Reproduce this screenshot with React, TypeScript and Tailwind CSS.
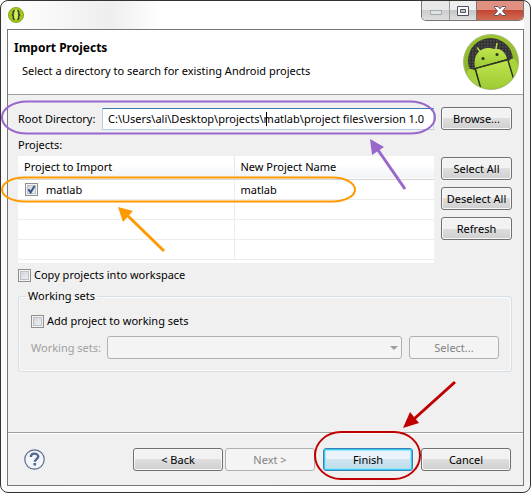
import { useState } from 'react'
import type { ButtonHTMLAttributes } from 'react'
import clsx from 'clsx'

interface DialogButtonProps extends ButtonHTMLAttributes<HTMLButtonElement> {
  primary?: boolean
}

function DialogButton({ primary, className, ...props }: DialogButtonProps) {
  return (
    <button
      type="button"
      className={clsx(
        'h-[23px] shrink-0 whitespace-nowrap rounded-[3px] border text-center leading-5',
        primary
          ? 'border-[#3c7fb1] bg-linear-to-b from-[#eaf4fa] from-50% via-[#cfe4f0] via-50% to-[#bcdcea] shadow-[inset_0_0_0_1px_#38c8f4,inset_0_0_0_2px_#a4e4f8]'
          : 'border-[#707070] bg-linear-to-b from-[#f2f2f2] from-50% via-[#dedede] via-50% to-[#cfcfcf] shadow-[inset_0_0_0_1px_#f8f8f8]',
        'disabled:border-[#adb2b5] disabled:bg-none disabled:bg-[#f4f4f4] disabled:text-[#838383] disabled:shadow-none',
        className,
      )}
      {...props}
    />
  )
}

interface CheckboxProps {
  id: string
  checked: boolean
  onChange: (checked: boolean) => void
}

function Checkbox({ id, checked, onChange }: CheckboxProps) {
  return (
    <span className="relative flex size-[13px] shrink-0">
      <input
        id={id}
        type="checkbox"
        checked={checked}
        onChange={(e) => onChange(e.target.checked)}
        className="size-[13px] appearance-none border border-[#8e8f8f] bg-linear-to-br from-[#cbcfd5] to-[#f6f6f6] shadow-[inset_0_0_0_1px_#f4f4f4,inset_0_0_0_2px_#bcc1c7]"
      />
      {checked && (
        <svg viewBox="0 0 13 13" className="pointer-events-none absolute inset-0 size-[13px]">
          <path d="M3.4 6.2 L5.6 9.4 L9.6 3" fill="none" stroke="#3c5488" strokeWidth="2" />
        </svg>
      )}
    </span>
  )
}

function AdtIcon() {
  return (
    <svg viewBox="0 0 16 16" className="size-4" aria-hidden="true">
      <circle cx="8" cy="8" r="7.6" fill="#a4c814" stroke="#7b9c12" strokeWidth=".8" />
      <ellipse cx="8" cy="7.5" rx="2.6" ry="5" fill="#d2ea5c" />
      <path
        d="M6.8 3.6 C5.1 3.6 5.3 5 5.3 6.2 C5.3 7.4 4.8 8 3.8 8 C4.8 8 5.3 8.6 5.3 9.8 C5.3 11 5.1 12.4 6.8 12.4 M9.2 3.6 C10.9 3.6 10.7 5 10.7 6.2 C10.7 7.4 11.2 8 12.2 8 C11.2 8 10.7 8.6 10.7 9.8 C10.7 11 10.9 12.4 9.2 12.4"
        fill="none"
        stroke="#39452f"
        strokeWidth="1.6"
      />
    </svg>
  )
}

function AndroidLogo() {
  return (
    <svg viewBox="0 0 56 56" className="size-14" aria-hidden="true">
      <defs>
        <linearGradient id="ring" x1="0" y1="0" x2="0" y2="1">
          <stop offset="0" stopColor="#9bc431" />
          <stop offset="1" stopColor="#86ac25" />
        </linearGradient>
        <linearGradient id="robot" x1="0" y1="0" x2="0" y2="1">
          <stop offset="0" stopColor="#bfe44e" />
          <stop offset="1" stopColor="#9bc932" />
        </linearGradient>
        <pattern id="mesh" width="3" height="3" patternUnits="userSpaceOnUse">
          <rect width="3" height="3" fill="#333333" />
          <rect width="1.5" height="1.5" fill="#505050" />
        </pattern>
        <clipPath id="disc">
          <circle cx="28" cy="28" r="27" />
        </clipPath>
      </defs>
      <circle cx="28" cy="28" r="27.5" fill="url(#ring)" stroke="#a9bd78" />
      <circle cx="27.5" cy="26.5" r="22.5" fill="url(#mesh)" />
      <g clipPath="url(#disc)">
        <path d="M3 36 L12 36 L17 56 L0 56 Z M45 27 L51 25 L56 40 L50 50 Z" fill="#8fb62b" />
        <path d="M4 39 C4 34 11 34 12.5 38 L17 56 L8 56 Z" fill="#a9d33c" />
        <path d="M46 30 C45 25 51 23 53 27 L57 36 L51 48 Z" fill="#a9d33c" />
        <path d="M12 34 C9 16 23 12 31 15 C38 14 43 19 44 25 Z" fill="url(#robot)" />
        <path d="M13 35 L45 26.5 L51 48 L38 57 L18 57 Z" fill="url(#robot)" />
        <path d="M12 34.5 L46 25" stroke="#27331a" strokeWidth="1.2" />
        <path d="M12.5 35.5 L18 55 M45 26.5 L51 46" stroke="#27331a" strokeWidth="1.4" />
        <path d="M17 17.5 L14.5 14 M33 14.5 L34 9.5" stroke="#b5dc4a" strokeWidth="1.5" strokeLinecap="round" />
        <circle cx="20" cy="24.5" r="1.5" fill="#27331a" />
        <circle cx="34" cy="20.5" r="1.5" fill="#27331a" />
      </g>
    </svg>
  )
}

function WindowControls() {
  return (
    <div className="flex h-5 overflow-hidden rounded-b-[5px] border border-t-0 border-[#777777]">
      <button
        type="button"
        aria-label="Minimize"
        className="flex w-7 items-center justify-center border-r border-[#999999] bg-linear-to-b from-[#e8e8e8] from-50% via-[#cdcdcd] via-50% to-[#dedede]"
      >
        <svg viewBox="0 0 12 5" className="mt-1 h-[5px] w-3">
          <rect x=".5" y=".5" width="11" height="4" fill="#dfe3e5" stroke="#a6adb1" />
        </svg>
      </button>
      <button
        type="button"
        aria-label="Maximize"
        className="flex w-[27px] items-center justify-center border-r border-[#777777] bg-linear-to-b from-[#eeeeee] from-50% via-[#c6c6c6] via-50% to-[#dedede]"
      >
        <svg viewBox="0 0 12 10" className="h-[10px] w-3">
          <path d="M.5 .5 H11.5 V9.5 H.5 Z M3.5 3.5 V6.5 H8.5 V3.5 Z" fill="#fafafa" stroke="#4c5063" fillRule="evenodd" />
        </svg>
      </button>
      <button
        type="button"
        aria-label="Close"
        className="flex w-[46px] items-center justify-center bg-linear-to-b from-[#df9080] from-50% via-[#c24634] via-50% to-[#d36b52]"
      >
        <svg viewBox="0 0 12 10" className="h-[10px] w-3">
          <path
            d="M.5 .5 H4 L6 2.8 L8 .5 H11.5 V1.5 L8.5 5 L11.5 8.5 V9.5 H8 L6 7.2 L4 9.5 H.5 V8.5 L3.5 5 L.5 1.5 Z"
            fill="#ffffff"
            stroke="#5d5360"
          />
        </svg>
      </button>
    </div>
  )
}

// hand drawn callouts that sit on top of the dialog
function Callouts() {
  return (
    <svg viewBox="0 0 531 493" className="pointer-events-none absolute left-0 top-0 h-[493px] w-[531px]" aria-hidden="true">
      <g fill="none" strokeWidth="2">
        <rect x="2" y="101.5" width="433" height="32" rx="25" ry="16" stroke="#9966cc" />
        <rect x="2" y="177.5" width="353" height="24" rx="22" ry="12" stroke="#ff9900" />
        <rect x="315" y="432" width="105" height="47" rx="26" ry="23.5" stroke="#c00000" />
      </g>
      <path d="M405 189 L378 150" stroke="#9966cc" strokeWidth="3" />
      <path d="M370 139 L372 155 L384 147 Z" fill="#9966cc" />
      <path d="M164 251 L128 216" stroke="#ff9900" strokeWidth="3" />
      <path d="M118 207 L123 222 L133 211 Z" fill="#ff9900" />
      <path d="M455 382 L414 419" stroke="#c00000" strokeWidth="3" />
      <path d="M403 428 L419 423 L410 412 Z" fill="#c00000" />
    </svg>
  )
}

export default function App() {
  const [directory, setDirectory] = useState('C:\\Users\\ali\\Desktop\\projects\\matlab\\project files\\version 1.0')
  const [selected, setSelected] = useState(true)
  const [copy, setCopy] = useState(false)
  const [workingSet, setWorkingSet] = useState(false)

  return (
    <div className="relative min-h-screen bg-white font-['Noto_Sans','Open_Sans',sans-serif] text-[11px] leading-4 text-black">
      <div className="flex min-h-screen flex-col rounded-lg border border-[#333333] bg-linear-to-r from-[#fafafa] via-white to-[#f2f2f2] px-[6px] pb-[6px]">
        <div className="flex h-7 shrink-0 items-start justify-between bg-linear-to-r from-white via-[#eeeeee] via-20% to-white to-30% pl-px">
          <div className="pt-[6px]">
            <AdtIcon />
          </div>
          <WindowControls />
        </div>

        <main className="flex grow flex-col border border-[#777777] bg-[#f0f0f0]">
          <header className="flex h-[65px] shrink-0 justify-between border-b border-[#a0a0a0] bg-white pl-[6px] pr-1 pt-1">
            <div className="pt-[6px]">
              <h1 className="text-[12px] font-bold leading-4">Import Projects</h1>
              <p className="pl-2 pt-[7px]">Select a directory to search for existing Android projects</p>
            </div>
            <AndroidLogo />
          </header>

          <div className="grow pl-[10px] pr-[11px] pt-3">
            <div className="flex items-center">
              <label htmlFor="root" className="w-[84px] shrink-0">
                Root Directory:
              </label>
              <div className="relative flex min-w-0 grow">
                <input
                  id="root"
                  type="text"
                  value={directory}
                  onChange={(e) => setDirectory(e.target.value)}
                  className="h-[22px] w-full border border-[#b5cfe7] border-t-[#3d7bad] bg-white pl-[5px]"
                />
                {/* text caret */}
                <span className="absolute left-[164px] top-1 h-[14px] w-px bg-black" />
              </div>
              <DialogButton className="ml-[7px] w-[71px]">Browse...</DialogButton>
            </div>

            <p className="pb-[3px] pt-[7px]">Projects:</p>

            <div className="flex gap-[7px]">
              <div className="h-[107px] grow bg-white">
                <table className="w-full table-fixed border-collapse text-left">
                  <thead>
                    <tr className="h-[23px] border-b border-[#d5d5d5] bg-linear-to-b from-white from-40% to-[#f1f3f6]">
                      <th className="w-[216px] border-r border-[#e3e8ee] pl-[6px] font-normal">Project to Import</th>
                      <th className="pl-[6px] font-normal">New Project Name</th>
                    </tr>
                  </thead>
                  <tbody>
                    <tr className="h-5 border-b border-[#ededed]">
                      <td className="border-r border-[#ededed] pl-[7px] pt-px">
                        <div className="flex items-center gap-2">
                          <Checkbox id="matlab" checked={selected} onChange={setSelected} />
                          <label htmlFor="matlab">matlab</label>
                        </div>
                      </td>
                      <td className="pl-[6px] pt-px">matlab</td>
                    </tr>
                    {[1, 2, 3].map((row) => (
                      <tr key={row} className="h-5 border-b border-[#ededed]">
                        <td className="border-r border-[#ededed]" />
                        <td />
                      </tr>
                    ))}
                  </tbody>
                </table>
              </div>
              <div className="flex flex-col gap-[7px] pt-px">
                <DialogButton className="w-[71px]">Select All</DialogButton>
                <DialogButton className="w-[71px]">Deselect All</DialogButton>
                <DialogButton className="w-[71px]">Refresh</DialogButton>
              </div>
            </div>

            <div className="flex items-center gap-[3px] pt-1">
              <Checkbox id="copy" checked={copy} onChange={setCopy} />
              <label htmlFor="copy">Copy projects into workspace</label>
            </div>

            <fieldset className="mt-[5px] rounded-[3px] border border-[#d5dfe5] px-3 pb-3 shadow-[inset_0_0_0_1px_#fafafa]">
              <legend className="-ml-[5px] px-[2px]">Working sets</legend>
              <div className="flex items-center gap-[3px] pt-[9px]">
                <Checkbox id="add" checked={workingSet} onChange={setWorkingSet} />
                <label htmlFor="add">Add project to working sets</label>
              </div>
              <div className="flex items-center pt-[7px]">
                <label htmlFor="sets" className="w-[76px] shrink-0 text-[#a0a0a0]">
                  Working sets:
                </label>
                <div className="relative flex grow">
                  <select
                    id="sets"
                    disabled
                    className="h-[23px] w-full appearance-none rounded-[3px] border border-[#adb2b5] bg-[#f4f4f4]"
                  />
                  <svg viewBox="0 0 8 4" className="pointer-events-none absolute right-1 top-[10px] h-1 w-2">
                    <path d="M0 0 H8 L4 4 Z" fill="#9a9fa3" />
                  </svg>
                </div>
                <DialogButton disabled className="ml-[7px] w-[90px]">
                  Select...
                </DialogButton>
              </div>
            </fieldset>
          </div>

          <footer className="flex shrink-0 items-center border-t border-[#a0a0a0] pb-[14px] pl-[10px] pr-3 pt-[15px] shadow-[inset_0_1px_0_#ffffff]">
            <button type="button" aria-label="Help" className="ml-[6px] mr-auto">
              <svg viewBox="0 0 21 21" className="size-[21px]">
                <circle cx="10.5" cy="10.5" r="9.7" fill="#f4f5f8" stroke="#5a6c92" strokeWidth="1.2" />
                <path
                  d="M6.8 8 C6.8 3.6 14.2 3.6 14.2 7.6 C14.2 10 10.8 10.2 10.8 12.8"
                  fill="none"
                  stroke="#526894"
                  strokeWidth="2.4"
                />
                <rect x="9.5" y="14" width="2.6" height="2.5" fill="#526894" />
              </svg>
            </button>
            <DialogButton className="w-[90px]">&lt; Back</DialogButton>
            <DialogButton disabled className="ml-[2px] w-[90px]">
              Next &gt;
            </DialogButton>
            <DialogButton primary className="ml-2 w-[90px]">
              Finish
            </DialogButton>
            <DialogButton className="ml-2 w-[90px]">Cancel</DialogButton>
          </footer>
        </main>
      </div>
      <Callouts />
    </div>
  )
}
